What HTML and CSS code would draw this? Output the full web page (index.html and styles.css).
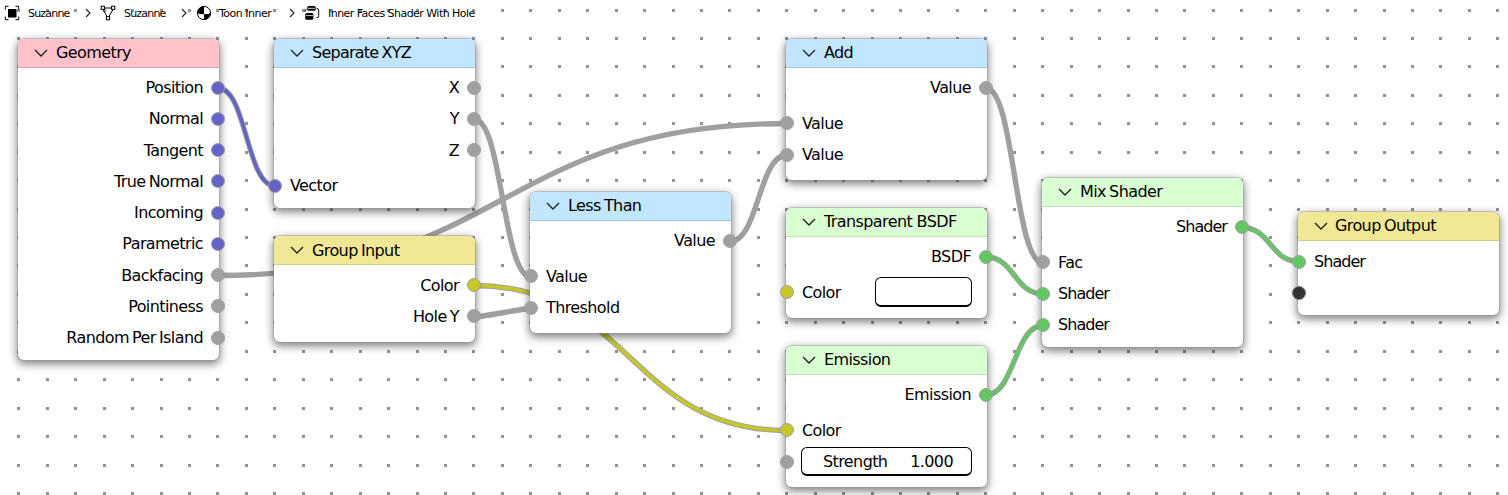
FILE: index.html
```html
<!DOCTYPE html>
<html lang="en">
<head>
<meta charset="utf-8">
<title>Shader Editor</title>
<link rel="stylesheet" href="styles.css">
</head>
<body>
<main class="editor">
<svg class="canvas" width="1508" height="495">
  <g id="grid" class="grid"></g>
  <g id="links" class="links"></g>
</svg>

<nav class="path">
  <svg class="path-icon" viewBox="0 0 16 16"><rect x="4" y="4" width="8.5" height="8.5"/><path class="line" d="M1.3 4.5V1.3H4.5M11.5 1.3H14.7V4.5M14.7 11.5V14.7H11.5M4.5 14.7H1.3V11.5"/></svg>
  <span class="crumb c1">Suzanne</span>
  <svg class="sep" viewBox="0 0 6 10"><path d="M1 1L5 5L1 9"/></svg>
  <svg class="path-icon" viewBox="0 0 16 16"><path class="line" d="M4.5 3H11.5M3.2 4.8L7 11.5M12.8 4.8L9 11.5"/><rect class="line" x="1.2" y="1.2" width="3.2" height="3.2"/><rect class="line" x="11.6" y="1.2" width="3.2" height="3.2"/><rect class="line" x="6.4" y="11.6" width="3.2" height="3.2"/></svg>
  <span class="crumb c2">Suzanne</span>
  <svg class="sep" viewBox="0 0 6 10"><path d="M1 1L5 5L1 9"/></svg>
  <svg class="path-icon" viewBox="0 0 16 16"><circle class="line" cx="8" cy="8" r="6.6"/><path d="M8 1.2A6.8 6.8 0 0 0 1.2 8Q4 9.5 8 9.3ZM8 9.3Q12 9.3 14.8 8A6.8 6.8 0 0 1 8 14.8Z"/></svg>
  <span class="crumb c3">Toon Inner</span>
  <svg class="sep" viewBox="0 0 6 10"><path d="M1 1L5 5L1 9"/></svg>
  <svg class="path-icon" viewBox="0 0 16 16"><rect x="3.3" y="1" width="8.4" height="4.8" rx="1.6"/><rect x="1.2" y="8" width="8.2" height="6.8" rx="1.6"/><path class="gap" d="M4 3.3H11M1.8 10.6H9"/><path class="line" d="M2.6 4.2Q1.2 4.4 1.2 6.6M12.6 3.4Q14.7 3.4 14.7 5.4V10.8Q14.7 12.8 12.4 12.8"/></svg>
  <span class="crumb c4">Inner Faces Shader With Hole</span>
</nav>

<section class="node geometry">
  <header class="head input"><svg class="chev" viewBox="0 0 14 8"><path d="M1 1L7 7L13 1"/></svg>Geometry</header>
  <ul class="rows">
    <li class="row out">Position<i class="socket vector"></i></li>
    <li class="row out">Normal<i class="socket vector"></i></li>
    <li class="row out">Tangent<i class="socket vector"></i></li>
    <li class="row out">True Normal<i class="socket vector"></i></li>
    <li class="row out">Incoming<i class="socket vector"></i></li>
    <li class="row out">Parametric<i class="socket vector"></i></li>
    <li class="row out">Backfacing<i class="socket"></i></li>
    <li class="row out">Pointiness<i class="socket"></i></li>
    <li class="row out">Random Per Island<i class="socket"></i></li>
  </ul>
</section>

<section class="node separate">
  <header class="head convert"><svg class="chev" viewBox="0 0 14 8"><path d="M1 1L7 7L13 1"/></svg>Separate XYZ</header>
  <ul class="rows">
    <li class="row out">X<i class="socket"></i></li>
    <li class="row out">Y<i class="socket"></i></li>
    <li class="row out">Z<i class="socket"></i></li>
    <li class="row in first"><i class="socket vector"></i>Vector</li>
  </ul>
</section>

<section class="node group-input">
  <header class="head group"><svg class="chev" viewBox="0 0 14 8"><path d="M1 1L7 7L13 1"/></svg>Group Input</header>
  <ul class="rows">
    <li class="row out">Color<i class="socket color"></i></li>
    <li class="row out">Hole Y<i class="socket"></i></li>
  </ul>
</section>

<section class="node less">
  <header class="head convert"><svg class="chev" viewBox="0 0 14 8"><path d="M1 1L7 7L13 1"/></svg>Less Than</header>
  <ul class="rows">
    <li class="row out">Value<i class="socket"></i></li>
    <li class="row in first"><i class="socket"></i>Value</li>
    <li class="row in"><i class="socket"></i>Threshold</li>
  </ul>
</section>

<section class="node add">
  <header class="head convert"><svg class="chev" viewBox="0 0 14 8"><path d="M1 1L7 7L13 1"/></svg>Add</header>
  <ul class="rows">
    <li class="row out">Value<i class="socket"></i></li>
    <li class="row in first"><i class="socket"></i>Value</li>
    <li class="row in"><i class="socket"></i>Value</li>
  </ul>
</section>

<section class="node transparent">
  <header class="head shade"><svg class="chev" viewBox="0 0 14 8"><path d="M1 1L7 7L13 1"/></svg>Transparent BSDF</header>
  <ul class="rows">
    <li class="row out">BSDF<i class="socket shader"></i></li>
    <li class="row in first"><i class="socket color"></i>Color<span class="swatch"></span></li>
  </ul>
</section>

<section class="node emission">
  <header class="head shade"><svg class="chev" viewBox="0 0 14 8"><path d="M1 1L7 7L13 1"/></svg>Emission</header>
  <ul class="rows">
    <li class="row out">Emission<i class="socket shader"></i></li>
    <li class="row in first"><i class="socket color"></i>Color</li>
    <li class="row in"><i class="socket"></i><span class="field"><span>Strength</span><span>1.000</span></span></li>
  </ul>
</section>

<section class="node mix">
  <header class="head shade"><svg class="chev" viewBox="0 0 14 8"><path d="M1 1L7 7L13 1"/></svg>Mix Shader</header>
  <ul class="rows">
    <li class="row out"><span class="tight">Shader</span><i class="socket shader"></i></li>
    <li class="row in first"><i class="socket"></i>Fac</li>
    <li class="row in"><i class="socket shader"></i><span class="tight">Shader</span></li>
    <li class="row in"><i class="socket shader"></i><span class="tight">Shader</span></li>
  </ul>
</section>

<section class="node group-output">
  <header class="head group"><svg class="chev" viewBox="0 0 14 8"><path d="M1 1L7 7L13 1"/></svg>Group Output</header>
  <ul class="rows">
    <li class="row in"><i class="socket shader"></i><span class="tight">Shader</span></li>
    <li class="row in"><i class="socket virtual"></i></li>
  </ul>
</section>
</main>
<script src="editor.js"></script>
</body>
</html>
```
FILE: styles.css
```css
* { box-sizing: border-box; }
body { margin: 0; background: #fff; color: #000; font-family: "DejaVu Sans", sans-serif; }
.editor { position: relative; width: 1508px; height: 495px; overflow: hidden; }
.canvas { position: absolute; inset: 0; }
.grid rect { fill: #929292; }
.links path { fill: none; stroke-linecap: round; }
.links .edge { stroke: #a0a0a0; stroke-width: 5.4; }
.links .core { stroke: #a0a0a0; stroke-width: 3.4; }
.links .core.vector { stroke: #6663c7; }
.links .core.color { stroke: #c7c729; }
.links .core.shader { stroke: #63c763; }

.path { position: relative; display: flex; align-items: center; height: 26px; padding-left: 4px; font-size: 11px; letter-spacing: -0.5px; }
.path-icon { width: 16px; height: 16px; flex: none; }
.path-icon .line { fill: none; stroke: #000; stroke-width: 1; }
.path-icon .gap { stroke: #fff; stroke-width: .8; }
.crumb { white-space: nowrap; flex: none; margin-left: 8px; }
.c1, .c2 { width: 57px; letter-spacing: -0.8px; }
.c3 { width: 70px; margin-left: 7px; }
.c4 { margin-left: 8px; letter-spacing: -0.54px; }
.sep { width: 6px; height: 10px; flex: none; margin-right: 9px; }
.sep path { fill: none; stroke: #222; stroke-width: 1.1; }

.node { position: absolute; width: 201px; background: #fff; border-radius: 6px; box-shadow: 0 0 0 1px rgba(150,150,150,.45), 0 3px 9px 1px rgba(0,0,0,.5); font-size: 16px; letter-spacing: -0.6px; word-spacing: -1.3px; }
.geometry { left: 18px; top: 38.5px; height: 321.5px; }
.separate { left: 274px; top: 38.5px; height: 169.5px; }
.group-input { left: 274px; top: 236px; height: 106px; }
.less { left: 530px; top: 191.5px; height: 141.5px; }
.add { left: 786px; top: 38.5px; height: 141.5px; }
.transparent { left: 786px; top: 207.5px; height: 110px; word-spacing: 0; }
.emission { left: 786px; top: 345.5px; height: 141.5px; }
.mix { left: 1042px; top: 177.5px; height: 169.5px; }
.group-output { left: 1298px; top: 211.5px; height: 103.5px; }

.head { display: flex; align-items: center; height: 29px; padding-left: 16px; border-radius: 6px 6px 0 0; border-bottom: 1px solid rgba(0,0,0,.13); }
.head.input { background: #ffc2cb; }
.head.convert { background: #c2e6ff; }
.head.group { background: #f0e895; }
.head.shade { background: #daffd2; }
.separate .head { letter-spacing: -0.75px; }
.group-output .head .chev { margin-right: 7px; }
.chev { width: 14px; height: 8px; margin-right: 8px; }
.chev path { fill: none; stroke: #222; stroke-width: 1.4; }

.rows { list-style: none; margin: 0; padding: 4.6px 0 0; }
.group-output .rows { padding-top: 5.4px; }
.row { display: flex; align-items: center; height: 31.25px; white-space: nowrap; }
.row.out { justify-content: flex-end; }
.row.first { margin-top: 4.5px; }
.tight { letter-spacing: -0.95px; }
.socket { width: 14px; height: 14px; flex: none; border-radius: 50%; background: #a0a0a0; border: 1px solid #a0a0a0; }
.out .socket { margin: 0 -6px 0 8px; }
.in .socket { margin: 0 8px 0 -6px; }
.socket.vector { background: #6663c7; }
.socket.color { background: #c7c729; }
.socket.shader { background: #63c763; }
.socket.virtual { background: #333; border-color: #777; }
.swatch { width: 97px; height: 30px; margin: 0 15px 0 auto; border: 1px solid #000; border-bottom-width: 2px; border-radius: 6px; }
.field { flex: 1; display: flex; align-items: center; justify-content: space-between; height: 29px; margin: 0 15px 0 -1px; padding: 0 18px 0 21px; border: 1px solid #000; border-bottom-width: 2px; border-radius: 6px; }
```
FILE: editor.js
```js
const NS = 'http://www.w3.org/2000/svg';
function draw(parent, tag, attrs) {
  const el = document.createElementNS(NS, tag);
  for (const key in attrs) el.setAttribute(key, attrs[key]);
  parent.appendChild(el);
}

// Backdrop dots, snapped to whole pixels
const grid = document.getElementById('grid');
const pitch = 28.44;
for (let y = 10; y < 495; y += pitch) {
  for (let x = 18.9; x < 1508; x += pitch) {
    draw(grid, 'rect', { x: Math.floor(x) - 1, y: Math.floor(y) - 1, width: 3, height: 3 });
  }
}

// Links between sockets: x1, y1, x2, y2, type, handle length
const links = [
  [218, 88, 275, 186, 'vector'],
  [218, 275.5, 787, 123.5, 'value'],
  [474, 119, 531, 277, 'value'],
  [474, 285.5, 787, 430.5, 'color'],
  [474, 317, 531, 308.5, 'value', 8],
  [730, 241.5, 787, 155, 'value'],
  [986, 88, 1043, 263, 'value'],
  [986, 257, 1043, 294, 'shader'],
  [986, 395, 1043, 325.5, 'shader'],
  [1242, 227.5, 1299, 261.5, 'shader']
];
const group = document.getElementById('links');
for (const [x1, y1, x2, y2, type, handle] of links) {
  const h = handle || (x2 - x1) / 2;
  const d = `M${x1} ${y1}C${x1 + h} ${y1} ${x2 - h} ${y2} ${x2} ${y2}`;
  draw(group, 'path', { d, class: 'edge' });
  draw(group, 'path', { d, class: 'core ' + type });
}
```
